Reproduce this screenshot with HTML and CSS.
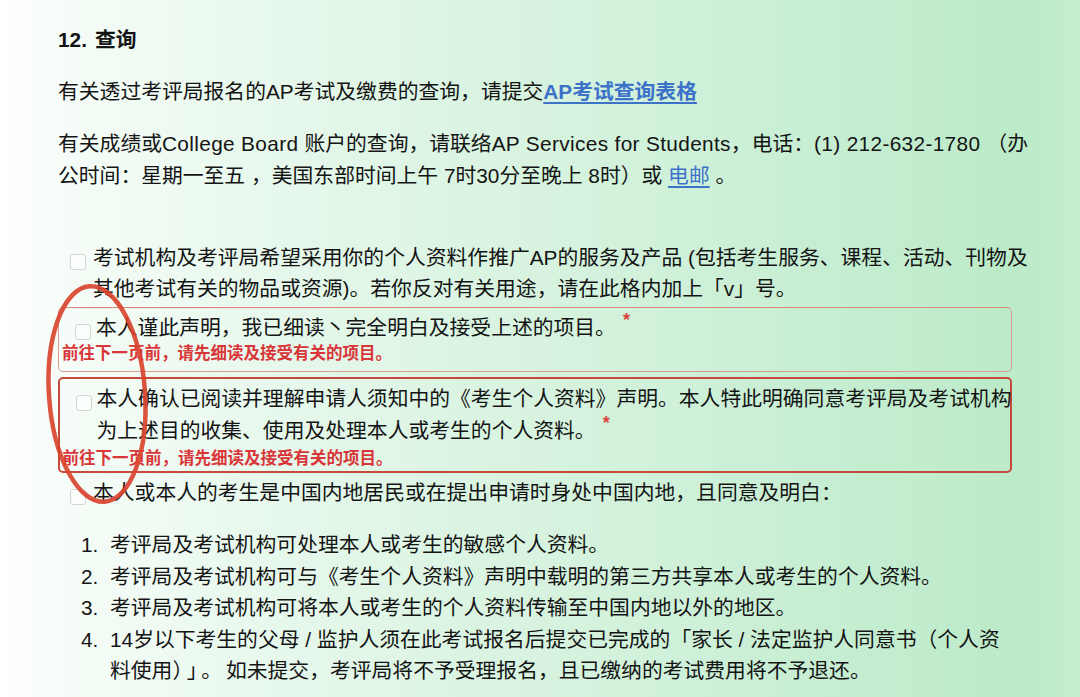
FILE: index.html
```html
<!DOCTYPE html>
<html lang="zh-CN">
<head>
<meta charset="utf-8">
<title>12. 查询</title>
<link rel="stylesheet" href="styles.css">
</head>
<body>
<main class="page">
  <h2 class="title">12.<span class="title-cn">查询</span></h2>
  <p class="para first-para">有关透过考评局报名的AP考试及缴费的查询，请提交<a class="link strong" href="#">AP考试查询表格</a></p>
  <p class="para">有关成绩或<span class="en">College Board </span>账户的查询，请联络<span class="en">AP Services for Students</span>，电话：<span class="en">(1) 212-632-1780 </span>（办<br>公时间：星期一至五 ，美国东部时间上午 7时30分至晚上 8时）或 <a class="link" href="#">电邮</a> 。</p>

  <div class="form">
    <div class="check-row plain">
      <span class="checkbox"></span>
      <div class="check-text">考试机构及考评局希望采用你的个人资料作推广AP的服务及产品 (包括考生服务、课程、活动、刊物及<br>其他考试有关的物品或资源)。若你反对有关用途，请在此格内加上「v」号。</div>
    </div>

    <div class="field field-a">
      <div class="check-row">
        <span class="checkbox"></span>
        <div class="check-text">本人谨此声明，我已细读丶完全明白及接受上述的项目。<span class="req">*</span></div>
      </div>
      <div class="err-msg">前往下一页前，请先细读及接受有关的项目。</div>
    </div>

    <div class="field field-b">
      <div class="check-row">
        <span class="checkbox"></span>
        <div class="check-text">本人确认已阅读并理解申请人须知中的《考生个人资料》声明。本人特此明确同意考评局及考试机构<br>为上述目的收集、使用及处理本人或考生的个人资料。<span class="req">*</span></div>
      </div>
      <div class="err-msg">前往下一页前，请先细读及接受有关的项目。</div>
    </div>

    <div class="check-row plain last">
      <span class="checkbox"></span>
      <div class="check-text">本人或本人的考生是中国内地居民或在提出申请时身处中国内地，且同意及明白：</div>
    </div>
  </div>

  <ol class="list">
    <li class="item"><span class="num">1.</span><span class="item-text">考评局及考试机构可处理本人或考生的敏感个人资料。</span></li>
    <li class="item"><span class="num">2.</span><span class="item-text">考评局及考试机构可与《考生个人资料》声明中载明的第三方共享本人或考生的个人资料。</span></li>
    <li class="item"><span class="num">3.</span><span class="item-text">考评局及考试机构可将本人或考生的个人资料传输至中国内地以外的地区。</span></li>
    <li class="item"><span class="num">4.</span><span class="item-text">14岁以下考生的父母 / 监护人须在此考试报名后提交已完成的「家长 / 法定监护人同意书（个人资<br>料使用<span class="punct">）」。</span>如未提交，考评局将不予受理报名，且已缴纳的考试费用将不予退还。</span></li>
  </ol>

  <svg class="annot" width="1080" height="697" viewBox="0 0 1080 697" aria-hidden="true">
    <ellipse cx="97" cy="394" rx="48" ry="108" transform="rotate(-4 97 394)" fill="none" stroke="#d9442f" stroke-width="4.5" opacity="0.92"/>
  </svg>
</main>
</body>
</html>
```

FILE: styles.css
```css
html, body {
  margin: 0;
  padding: 0;
}

body {
  width: 1080px;
  height: 697px;
  overflow: hidden;
  background: linear-gradient(90deg, #ffffff 0%, #f5fcf7 7%, #e7f8ec 25%, #d7f3df 50%, #c7eed3 75%, #bcebc9 94%, #c3edcf 100%);
  font-family: "Liberation Sans", "Noto Sans CJK SC", sans-serif;
  font-size: 20.8px;
  line-height: 31.5px;
  color: #141414;
}

.page {
  position: relative;
  height: 697px;
  padding: 24px 0 0 58px;
  box-sizing: border-box;
}

.title {
  margin: 0;
  font-size: 20.8px;
  line-height: 31.5px;
  font-weight: bold;
}

.title-cn {
  margin-left: 8px;
}

.para {
  margin: 20px 0 0;
  white-space: nowrap;
  line-height: 32px;
}

.en {
  letter-spacing: 0.35px;
}

.link {
  color: #3d72c9;
  text-decoration: underline;
  text-decoration-thickness: 2px;
  text-underline-offset: 3px;
}

.link.strong {
  font-weight: bold;
}

.form {
  margin-top: 50px;
  width: 954px;
  display: flex;
  flex-direction: column;
}

.check-row {
  display: flex;
  align-items: flex-start;
  gap: 5px;
  padding-left: 13px;
}

.check-row.plain {
  padding-left: 12px;
  gap: 7px;
}

.check-row.last {
  margin-top: 4px;
}

.checkbox {
  flex: none;
  width: 14px;
  height: 14px;
  margin-top: 12px;
  border: 1px solid #d3d6d3;
  border-radius: 3px;
  background: rgba(255, 255, 255, 0.55);
}

.check-text {
  white-space: nowrap;
}

.req {
  color: #d8443c;
  font-size: 18px;
  font-weight: bold;
  vertical-align: top;
  line-height: 16px;
  margin-left: 7px;
}

.field {
  border-radius: 5px;
  padding: 4px 3px 8px;
}

.field-a {
  margin-top: 2px;
  border: 1.5px solid #d79e90;
  border-top-color: #d9877c;
}

.field-b {
  margin-top: 5px;
  padding: 3.5px 2.5px 3.5px;
  border: 2px solid #c64a3c;
  line-height: 32.5px;
}

.err-msg {
  color: #d9363a;
  font-weight: bold;
  font-size: 16.5px;
  line-height: 20px;
  white-space: nowrap;
}

.list {
  list-style: none;
  margin: 20.5px 0 0;
  padding: 0 0 0 23px;
}

.item {
  display: flex;
  line-height: 31.5px;
}

.num {
  flex: none;
  width: 29px;
}

.item-text {
  white-space: nowrap;
}

.punct {
  letter-spacing: 4px;
}

.annot {
  position: absolute;
  left: 0;
  top: 0;
  pointer-events: none;
}
```
